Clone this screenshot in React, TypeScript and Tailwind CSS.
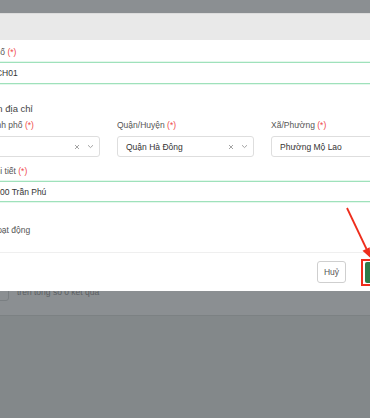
import React from "react";

const Req = () => <span className="text-[#f04848]"> (*)</span>;

const SelectBox = ({ value }: { value: string }) => (
  <div className="flex h-[21px] items-center rounded-[3px] border border-[#dedede] bg-white pl-[8px] pr-[5px]">
    <span className="flex-1 truncate text-[#333]">{value}</span>
    <svg width="6" height="6" viewBox="0 0 6 6" className="mr-[7px]">
      <path d="M1 1L5 5M5 1L1 5" stroke="#9a9a9a" strokeWidth="0.9" />
    </svg>
    <svg width="7" height="5" viewBox="0 0 7 5">
      <path d="M1 1.2L3.5 3.6L6 1.2" stroke="#9a9a9a" strokeWidth="0.9" fill="none" />
    </svg>
  </div>
);

export default function App() {
  return (
    <div className="relative h-[418px] w-[370px] overflow-hidden bg-[#83888a] font-['Liberation_Sans',Arial,sans-serif] text-[8.5px] leading-[12px]">
      {/* underlying page, dimmed by the overlay */}
      <div className="flex h-[316px] flex-col justify-end border-b border-[#7c8183] bg-[#8b8f92] pb-[14px]">
        <div className="ml-[-30px] flex h-[21px] items-center gap-[8px]">
          <div className="h-[21px] w-[39px] rounded-[3px] border border-[#7a7f82]" />
          <span className="pt-[3px] text-[#5c6063]">trên tổng số 0 kết quả</span>
        </div>
      </div>

      {/* modal */}
      <div className="absolute left-[-51px] top-[13px] w-[473px] bg-white">
        <div className="h-[27px] border-t border-[#dcdcdc] bg-[#e9e9e9]" />
        <div className="px-[14px] pb-[16px] pt-[6px] text-[#555]">
          <div className="h-[12px]">
            Mã tầng số<Req />
          </div>
          <div className="mt-[4px] flex h-[22px] items-center border border-[#9fe1bb] pl-[6px] text-[#333] shadow-[0_0_0_0.5px_#c9f0d9]">
            KHO1-CH01
          </div>

          <div className="mt-[19px] h-[12px] text-[9.5px] text-[#444]">Thông tin địa chỉ</div>

          <div className="mt-[4px] grid grid-cols-3 gap-x-[17px]">
            <div>
              <div className="h-[12px]">
                Tỉnh/Thành phố<Req />
              </div>
              <div className="mt-[5px]">
                <SelectBox value="" />
              </div>
            </div>
            <div>
              <div className="h-[12px]">
                Quận/Huyện<Req />
              </div>
              <div className="mt-[5px]">
                <SelectBox value="Quận Hà Đông" />
              </div>
            </div>
            <div>
              <div className="h-[12px]">
                Xã/Phường<Req />
              </div>
              <div className="mt-[5px]">
                <SelectBox value="Phường Mộ Lao" />
              </div>
            </div>
          </div>

          <div className="mt-[8px] h-[12px]">
            Địa chỉ chi tiết<Req />
          </div>
          <div className="mt-[4px] flex h-[21px] items-center border border-[#9fe1bb] pl-[2px] text-[#333] shadow-[0_0_0_0.5px_#c9f0d9]">
            Số nhà 100 Trần Phú
          </div>

          <div className="mt-[22px] flex h-[12px] items-center gap-[4px]">
            <div className="h-[12px] w-[24px] rounded-full bg-[#bfbfbf]" />
            <span>Hoạt động</span>
          </div>
        </div>

        <div className="flex justify-end gap-[19px] border-t border-[#efefef] pb-[8px] pl-[14px] pr-[19px] pt-[8px]">
          <button className="flex h-[22px] w-[29px] items-center justify-center rounded-[3px] border border-[#cfcfcf] bg-white text-[#555]">
            Huỷ
          </button>
          <div className="relative mt-[1px]">
            <button className="flex h-[21px] w-[38px] items-center justify-center rounded-[2px] bg-[#2d7b48] text-white">
              Lưu
            </button>
            <div className="absolute -bottom-[3px] -left-[4px] -right-[4px] -top-[3px] border-2 border-[#ee2d1c]" />
          </div>
        </div>
      </div>

      {/* red annotation arrow */}
      <svg className="pointer-events-none absolute left-0 top-0" width="370" height="418" viewBox="0 0 370 418">
        <line x1="347" y1="208" x2="366.5" y2="249" stroke="#ee2d1c" strokeWidth="1.8" />
        <polygon points="370.5,258 362.5,250.8 369.7,247.2" fill="#ee2d1c" />
      </svg>
    </div>
  );
}
